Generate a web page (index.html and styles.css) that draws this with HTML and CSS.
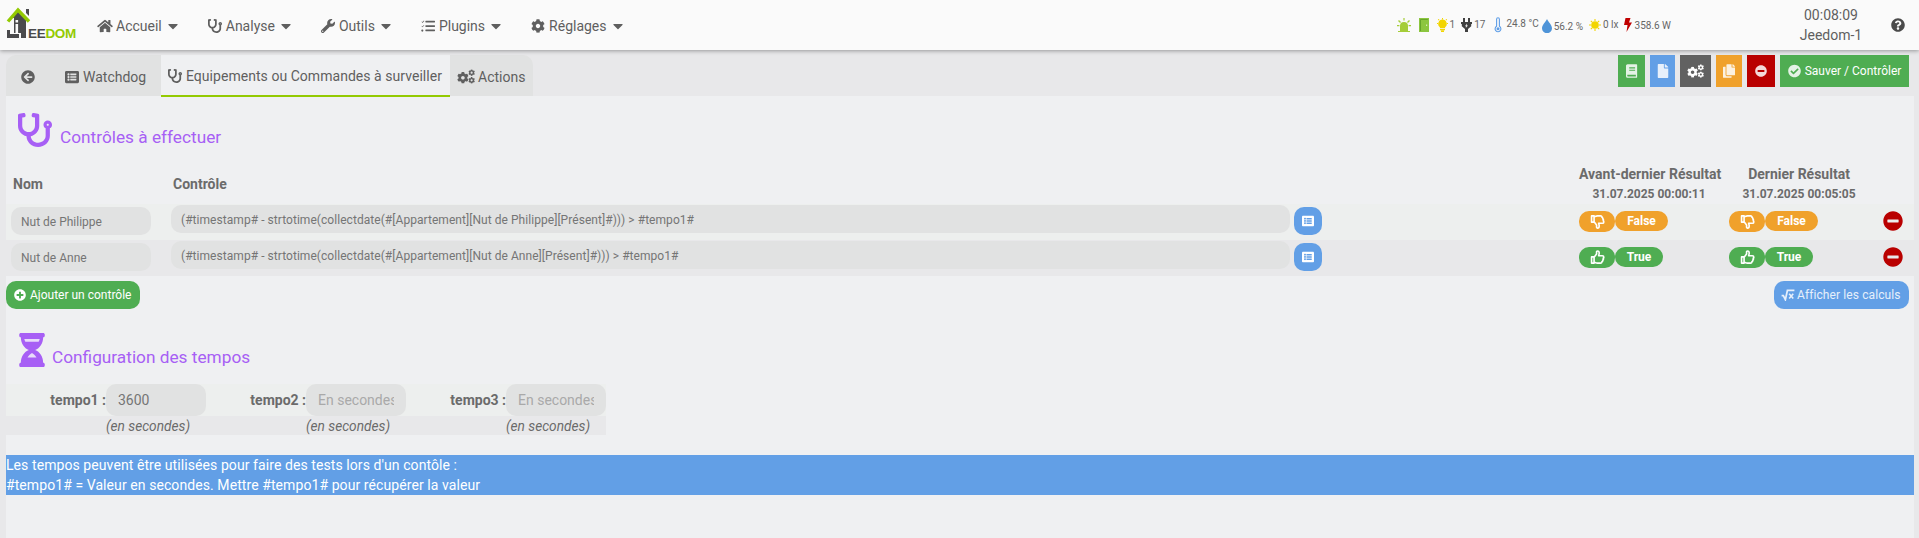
FILE: index.html
```html
<!DOCTYPE html>
<html lang="fr">
<head>
<meta charset="utf-8">
<title>Jeedom</title>
<link rel="stylesheet" href="styles.css">
</head>
<body>
<svg class="defs" width="0" height="0" aria-hidden="true">
  <symbol id="i-caret" viewBox="0 0 320 512"><path d="M31.3 192h257.3c17.8 0 26.7 21.5 14.1 34.1L174.1 354.8c-7.8 7.8-20.5 7.8-28.3 0L17.2 226.1C4.6 213.5 13.5 192 31.3 192z"/></symbol>
  <symbol id="i-home" viewBox="0 0 576 512"><path d="M280.37 148.26L96 300.11V464a16 16 0 0 0 16 16l112.06-.29a16 16 0 0 0 15.92-16V368a16 16 0 0 1 16-16h64a16 16 0 0 1 16 16v95.64a16 16 0 0 0 16 16.05L464 480a16 16 0 0 0 16-16V300L295.67 148.26a12.19 12.19 0 0 0-15.3 0zM571.6 251.47L488 182.56V44.05a12 12 0 0 0-12-12h-56a12 12 0 0 0-12 12v72.61L318.47 43a48 48 0 0 0-61 0L4.34 251.47a12 12 0 0 0-1.6 16.9l25.5 31A12 12 0 0 0 45.15 301l235.22-193.74a12.19 12.19 0 0 1 15.3 0L530.9 301a12 12 0 0 0 16.9-1.6l25.5-31a12 12 0 0 0-1.7-16.93z"/></symbol>
  <symbol id="i-steth" viewBox="0 0 512 512"><path d="M447.1 112c-34.2.5-62.3 28.4-63 62.6-.5 24.3 12.5 45.6 32 56.8V344c0 57.3-50.2 104-112 104-60 0-109.2-44.1-111.9-99.2C265 333.8 320 269.2 320 192V36.6c0-11.4-8.1-21.3-19.3-23.5L237.8.5c-13-2.6-25.6 5.8-28.2 18.8L206.4 35c-2.6 13 5.8 25.6 18.8 28.2l30.7 6.1v121.4c0 52.9-42.2 96.7-95.1 97.2-53.4.5-96.9-42.7-96.9-96V69.4l30.7-6.1c13-2.6 21.4-15.2 18.8-28.2l-3.1-15.7C107.7 6.4 95.1-2 82.1.6L19.3 13C8.1 15.3 0 25.1 0 36.6V192c0 77.3 55.1 142 128.1 156.8C130.7 439.2 208.6 512 304 512c97 0 176-75.4 176-168V231.4c19.1-11.1 32-31.7 32-55.4 0-35.7-29.2-64.5-64.9-64zm.9 80c-8.8 0-16-7.2-16-16s7.2-16 16-16 16 7.2 16 16-7.2 16-16 16z"/></symbol>
  <symbol id="i-wrench" viewBox="0 0 512 512"><path d="M507.73 109.1c-2.24-9.03-13.54-12.09-20.12-5.51l-74.36 74.36-67.88-11.31-11.31-67.88 74.36-74.36c6.62-6.62 3.43-17.9-5.66-20.16-47.38-11.74-99.55.91-136.58 37.93-39.64 39.64-50.55 97.1-34.05 147.2L18.74 402.76c-24.99 24.99-24.99 65.51 0 90.5 24.99 24.99 65.51 24.99 90.5 0l213.21-213.21c50.12 16.71 107.47 5.68 147.37-34.22 37.07-37.07 49.7-89.32 37.91-136.73zM64 472c-13.25 0-24-10.75-24-24 0-13.26 10.75-24 24-24s24 10.74 24 24c0 13.25-10.75 24-24 24z"/></symbol>
  <symbol id="i-tasks" viewBox="0 0 512 512"><path d="M176 64h320c9 0 16 7 16 16v32c0 9-7 16-16 16H176c-9 0-16-7-16-16V80c0-9 7-16 16-16zm0 160h320c9 0 16 7 16 16v32c0 9-7 16-16 16H176c-9 0-16-7-16-16v-32c0-9 7-16 16-16zm0 160h320c9 0 16 7 16 16v32c0 9-7 16-16 16H176c-9 0-16-7-16-16v-32c0-9 7-16 16-16zM48 384a40 40 0 1 1 0 80 40 40 0 0 1 0-80zM20 104l14-14 22 20 50-52 16 14-66 70zm0 160l14-14 22 20 50-52 16 14-66 70z"/></symbol>
  <symbol id="i-cog" viewBox="0 0 512 512"><path d="M487.4 315.7l-42.6-24.6c4.3-23.2 4.3-47 0-70.2l42.6-24.6c4.9-2.8 7.1-8.6 5.5-14-11.1-35.6-30-67.8-54.7-94.6-3.8-4.1-10-5.1-14.8-2.3L380.8 110c-17.9-15.4-38.5-27.3-60.8-35.1V25.8c0-5.6-3.9-10.5-9.4-11.7-36.7-8.2-74.3-7.8-109.2 0-5.5 1.2-9.4 6.1-9.4 11.7V75c-22.2 7.9-42.8 19.8-60.8 35.1L88.7 85.5c-4.9-2.8-11-1.9-14.8 2.3-24.7 26.7-43.6 58.9-54.7 94.6-1.7 5.4.6 11.2 5.5 14L67.3 221c-4.3 23.2-4.3 47 0 70.2l-42.6 24.6c-4.9 2.8-7.1 8.6-5.5 14 11.1 35.6 30 67.8 54.7 94.6 3.8 4.1 10 5.1 14.8 2.3l42.6-24.6c17.9 15.4 38.5 27.3 60.8 35.1v49.2c0 5.6 3.9 10.5 9.4 11.7 36.7 8.2 74.3 7.8 109.2 0 5.5-1.2 9.4-6.1 9.4-11.7v-49.2c22.2-7.9 42.8-19.8 60.8-35.1l42.6 24.6c4.9 2.8 11 1.9 14.8-2.3 24.7-26.7 43.6-58.9 54.7-94.6 1.5-5.5-.7-11.3-5.6-14.1zM256 336c-44.1 0-80-35.9-80-80s35.9-80 80-80 80 35.9 80 80-35.9 80-80 80z"/></symbol>
  <symbol id="i-cogs" viewBox="0 0 640 512"><use href="#i-cog" x="0" y="90" width="420" height="420"/><use href="#i-cog" x="400" y="0" width="240" height="240"/><use href="#i-cog" x="400" y="272" width="240" height="240"/></symbol>
  <symbol id="i-back" viewBox="0 0 512 512"><path d="M256 504C119 504 8 393 8 256S119 8 256 8s248 111 248 248-111 248-248 248zm28.9-143.6L209.4 288H392c13.3 0 24-10.7 24-24v-16c0-13.3-10.7-24-24-24H209.4l75.5-72.4c9.7-9.3 9.9-24.8.4-34.3l-11-10.9c-9.4-9.4-24.6-9.4-33.9 0L107.7 239c-9.4 9.4-9.4 24.6 0 33.9l132.7 132.7c9.4 9.4 24.6 9.4 33.9 0l11-10.9c9.5-9.5 9.3-25-.4-34.3z"/></symbol>
  <symbol id="i-list" viewBox="0 0 512 512"><path d="M464 480H48c-26.51 0-48-21.49-48-48V80c0-26.51 21.49-48 48-48h416c26.51 0 48 21.49 48 48v352c0 26.51-21.49 48-48 48zM128 120c-22.091 0-40 17.909-40 40s17.909 40 40 40 40-17.909 40-40-17.909-40-40-40zm0 96c-22.091 0-40 17.909-40 40s17.909 40 40 40 40-17.909 40-40-17.909-40-40-40zm0 96c-22.091 0-40 17.909-40 40s17.909 40 40 40 40-17.909 40-40-17.909-40-40-40zm288-136v-32c0-6.627-5.373-12-12-12H204c-6.627 0-12 5.373-12 12v32c0 6.627 5.373 12 12 12h200c6.627 0 12-5.373 12-12zm0 96v-32c0-6.627-5.373-12-12-12H204c-6.627 0-12 5.373-12 12v32c0 6.627 5.373 12 12 12h200c6.627 0 12-5.373 12-12zm0 96v-32c0-6.627-5.373-12-12-12H204c-6.627 0-12 5.373-12 12v32c0 6.627 5.373 12 12 12h200c6.627 0 12-5.373 12-12z"/></symbol>
  <symbol id="i-book" viewBox="0 0 448 512"><path d="M60 0h330c14 0 26 12 26 26v460c0 14-12 26-26 26H60c-33 0-60-27-60-60V60C0 27 27 0 60 0zm60 120v40h220v-40H120zm0 90v40h220v-40H120zM48 400v40c0 10 8 20 20 20h300v-60H48z"/></symbol>
  <symbol id="i-file" viewBox="0 0 384 512"><path d="M224 136V0H24C10.7 0 0 10.7 0 24v464c0 13.3 10.7 24 24 24h336c13.3 0 24-10.7 24-24V160H248c-13.2 0-24-10.8-24-24zm160-14.1v6.1H256V0h6.1c6.4 0 12.5 2.5 17 7l97.9 98c4.5 4.5 7 10.6 7 16.9z"/></symbol>
  <symbol id="i-copy" viewBox="0 0 448 512"><path d="M320 448v40c0 13.255-10.745 24-24 24H24c-13.255 0-24-10.745-24-24V120c0-13.255 10.745-24 24-24h72v296c0 30.879 25.121 56 56 56h168zm0-344V0H152c-13.255 0-24 10.745-24 24v368c0 13.255 10.745 24 24 24h272c13.255 0 24-10.745 24-24V128H344c-13.2 0-24-10.8-24-24zm120.971-31.029L375.029 7.029A24 24 0 0 0 358.059 0H352v96h96v-6.059a24 24 0 0 0-7.029-16.97z"/></symbol>
  <symbol id="i-minus" viewBox="0 0 512 512"><path d="M256 8C119 8 8 119 8 256s111 248 248 248 248-111 248-248S393 8 256 8zM124 296c-6.6 0-12-5.4-12-12v-56c0-6.6 5.4-12 12-12h264c6.6 0 12 5.4 12 12v56c0 6.6-5.4 12-12 12H124z"/></symbol>
  <symbol id="i-plus" viewBox="0 0 512 512"><path d="M256 8C119 8 8 119 8 256s111 248 248 248 248-111 248-248S393 8 256 8zm144 276c0 6.6-5.4 12-12 12h-92v92c0 6.6-5.4 12-12 12h-56c-6.6 0-12-5.4-12-12v-92h-92c-6.6 0-12-5.4-12-12v-56c0-6.6 5.4-12 12-12h92v-92c0-6.6 5.4-12 12-12h56c6.6 0 12 5.4 12 12v92h92c6.6 0 12 5.4 12 12v56z"/></symbol>
  <symbol id="i-check" viewBox="0 0 512 512"><path d="M504 256c0 136.967-111.033 248-248 248S8 392.967 8 256 119.033 8 256 8s248 111.033 248 248zM227.314 387.314l184-184c6.248-6.248 6.248-16.379 0-22.627l-22.627-22.627c-6.248-6.249-16.379-6.249-22.628 0L216 308.118l-69.059-69.059c-6.248-6.248-16.379-6.248-22.628 0l-22.627 22.627c-6.248 6.248-6.248 16.379 0 22.627l104 104c6.249 6.249 16.379 6.249 22.628.001z"/></symbol>
  <symbol id="i-help" viewBox="0 0 512 512"><path d="M504 256c0 136.997-111.043 248-248 248S8 392.997 8 256C8 119.083 119.043 8 256 8s248 111.083 248 248zM262.655 90c-54.497 0-89.255 22.957-116.549 63.758-3.536 5.286-2.353 12.415 2.715 16.258l34.699 26.31c5.205 3.947 12.621 3.008 16.665-2.122 17.864-22.658 30.113-35.797 57.303-35.797 20.429 0 45.698 13.148 45.698 32.958 0 14.976-12.363 22.667-32.534 33.976C247.128 238.528 216 254.941 216 296v4c0 6.627 5.373 12 12 12h56c6.627 0 12-5.373 12-12v-1.333c0-28.462 83.186-29.647 83.186-106.667 0-58.002-60.165-102-116.531-102zM256 338c-25.365 0-46 20.635-46 46 0 25.364 20.635 46 46 46s46-20.636 46-46c0-25.365-20.635-46-46-46z"/></symbol>
  <symbol id="i-up" viewBox="0 0 24 24"><path fill="none" stroke="currentColor" stroke-width="2.6" stroke-linejoin="round" d="M2.5 11h4v10h-4zM6.5 11.500l4-5V3.200c0-1 .6-1.700 1.600-1.700 1.800 0 2.600 1.700 2.600 3.500 0 1.500-.6 2.800-.9 4.200h5.900c1.500 0 2.400 1 2.400 2.200 0 .8-.4 1.400-1 1.800.4.500.5 1 .4 1.500-.1.600-.5 1.100-1 1.400.2.600.1 1.200-.2 1.600-.3.500-.8.800-1.200.9.100 1.300-.8 2.400-2.200 2.400h-5c-1.800 0-3-.7-5.400-1.500"/></symbol>
  <symbol id="i-down" viewBox="0 0 24 24"><g transform="matrix(1 0 0 -1 0 24)"><path fill="none" stroke="currentColor" stroke-width="2.6" stroke-linejoin="round" d="M2.5 11h4v10h-4zM6.5 11.500l4-5V3.200c0-1 .6-1.700 1.600-1.700 1.800 0 2.600 1.700 2.600 3.500 0 1.500-.6 2.800-.9 4.200h5.900c1.500 0 2.400 1 2.400 2.200 0 .8-.4 1.400-1 1.800.4.500.5 1 .4 1.500-.1.600-.5 1.100-1 1.400.2.600.1 1.200-.2 1.600-.3.500-.8.800-1.200.9.100 1.300-.8 2.400-2.200 2.400h-5c-1.800 0-3-.7-5.400-1.500"/></g></symbol>
  <symbol id="i-sqrt" viewBox="0 0 24 20"><path fill="none" stroke="currentColor" stroke-width="3" d="M1 11h3l3.500 7L11 2h12"/><path fill="none" stroke="currentColor" stroke-width="2.800" d="M14 8l7 8M21 8l-7 8"/></symbol>
</svg>

<header class="navbar">
  <svg class="logo" viewBox="0 0 82 50" role="img" aria-label="Jeedom">
    <path fill="#4a4a4c" d="M11 18l8-8 7 7v21H21V33h-7V18z"/>
    <path fill="#4a4a4c" d="M26 9h3v7l-3-3z"/>
    <path fill="#fafafa" d="M15.500 20h2.600v2.600h-2.600zM15.500 24h2.600v10h-2.600z"/>
    <path fill="#4a4a4c" d="M7 30h3v4h9v4H7z"/>
    <path fill="none" stroke="#93ca02" stroke-width="3.400" d="M8 21.500L18 10l11 11.500"/>
    <text class="logo-text" x="28" y="38"><tspan class="logo-ee">EE</tspan><tspan class="logo-dom">DOM</tspan></text>
  </svg>
  <nav class="menu">
    <a class="menu-item"><svg class="ic home"><use href="#i-home"/></svg>Accueil<svg class="caret"><use href="#i-caret"/></svg></a>
    <a class="menu-item"><svg class="ic"><use href="#i-steth"/></svg>Analyse<svg class="caret"><use href="#i-caret"/></svg></a>
    <a class="menu-item"><svg class="ic"><use href="#i-wrench"/></svg>Outils<svg class="caret"><use href="#i-caret"/></svg></a>
    <a class="menu-item"><svg class="ic"><use href="#i-tasks"/></svg>Plugins<svg class="caret"><use href="#i-caret"/></svg></a>
    <a class="menu-item"><svg class="ic"><use href="#i-cog"/></svg>Réglages<svg class="caret"><use href="#i-caret"/></svg></a>
  </nav>
  <div class="status">
    <svg class="st st-alert" viewBox="0 0 14 14"><path fill="#a5cd39" d="M3 13V8a4 4 0 0 1 8 0v5zM1 13h12v1H1zM6.400 0h1.200v2.500H6.400zM1 3l1-.9 2 2-.9.9zM13 3l-1-.9-2 2 .9.9zM0 7h2.400v1.200H0zM11.600 7H14v1.200h-2.400z"/></svg>
    <svg class="st st-door" viewBox="0 0 10 14"><path fill="#8cc63f" d="M0 0h10v14H0z"/><path fill="#5d9c26" d="M1.200 1.200h7.600v.8H2v11H1.200z"/><path fill="#d7eab0" d="M7 6.500h1.200v1.400H7z"/></svg>
    <span class="st-item st-bulb"><svg class="st" viewBox="0 0 11 14"><path fill="#f2d500" d="M5.500 1.500a4.300 4.300 0 0 1 2.600 7.700V10.300H2.900V9.200A4.300 4.300 0 0 1 5.500 1.500zM3 10.900h5v1.300H3zM4 12.600h3V14H4zM5 0h1v1.300H5zM0 5h1v1H0zM10 5h1v1h-1zM.8 1.600l.8-.7.9.9-.8.7zM10.200 1.600l-.8-.7-.9.9.8.7z"/></svg><span class="raised1">1</span></span>
    <span class="st-item st-plug"><svg class="st" viewBox="0 0 11 14"><path fill="#3f3f3f" d="M2 0h2v4h3V0h2v4h2v2h-.8v2.300L7 11v3H4v-3L.8 8.300V6H0V4h2z"/><path fill="#fafafa" d="M6 5.500L4 8.300h1.200L4.700 10 7 7.400H5.700z"/></svg><span class="raised1">17</span></span>
    <span class="st-item st-temp"><svg class="st" viewBox="0 0 8 16"><path fill="none" stroke="#5f9ee7" stroke-width="1.100" d="M2.600 9.300V2.200a1.400 1.400 0 0 1 2.800 0v7.100a2.900 2.900 0 1 1-2.800 0z"/><circle cx="4" cy="11.800" r="1.500" fill="#5f9ee7"/></svg><span class="raised">24.8 °C</span></span>
    <span class="st-item st-hum"><svg class="st" viewBox="0 0 10 14"><path fill="#4f94d8" d="M5 0c1 2.600 5 6 5 9.200A5 5 0 0 1 0 9.200C0 6 4 2.600 5 0z"/></svg><span class="lower">56.2 %</span></span>
    <span class="st-item st-lum"><svg class="st" viewBox="0 0 12 12"><circle cx="6" cy="6" r="3.800" fill="#f2d500"/><path stroke="#f2d500" stroke-width="1.100" d="M6 0v2M6 10v2M0 6h2M10 6h2M1.800 1.800l1.400 1.400M8.800 8.800l1.400 1.400M10.200 1.800L8.800 3.200M3.200 8.800l-1.400 1.400"/></svg><span class="raised1">0 lx</span></span>
    <span class="st-item st-pow"><svg class="st" viewBox="0 0 8 14"><path fill="#c00000" d="M1.500 0h5L5 4.500h3L2.500 14 3.500 7H0z"/></svg><span>358.6 W</span></span>
  </div>
  <div class="clock"><span>00:08:09</span><span>Jeedom-1</span></div>
  <svg class="help"><use href="#i-help"/></svg>
</header>

<main class="page">
  <div class="topbar">
    <ul class="tabs">
      <li class="tab tab-back"><svg class="ic"><use href="#i-back"/></svg></li>
      <li class="tab tab-watch"><svg class="ic"><use href="#i-list"/></svg>Watchdog</li>
      <li class="tab tab-active"><svg class="ic"><use href="#i-steth"/></svg>Equipements ou Commandes à surveiller</li>
      <li class="tab tab-actions"><svg class="ic ic-cogs"><use href="#i-cogs"/></svg>Actions</li>
    </ul>
    <div class="toolbar">
      <a class="tool green w27"><svg class="ic"><use href="#i-book"/></svg></a>
      <a class="tool blue w25"><svg class="ic"><use href="#i-file"/></svg></a>
      <a class="tool gray w31"><svg class="ic ic-cogs"><use href="#i-cogs"/></svg></a>
      <a class="tool orange w26"><svg class="ic"><use href="#i-copy"/></svg></a>
      <a class="tool red w28"><svg class="ic"><use href="#i-minus"/></svg></a>
      <a class="tool green tool-save"><svg class="ic"><use href="#i-check"/></svg>Sauver / Contrôler</a>
    </div>
  </div>

  <section class="panel">
    <h3 class="section-title"><svg class="title-ic"><use href="#i-steth"/></svg><span class="title-text">Contrôles à effectuer</span></h3>

    <div class="grid grid-head">
      <div class="th name-th">Nom</div>
      <div class="th">Contrôle</div>
      <div></div>
      <div class="result-head"><div>Avant-dernier Résultat</div><div class="date">31.07.2025 00:00:11</div></div>
      <div class="result-head"><div>Dernier Résultat</div><div class="date">31.07.2025 00:05:05</div></div>
      <div></div>
    </div>

    <div class="grid row row-odd">
      <div class="cell-name"><input class="field field-name" value="Nut de Philippe" readonly></div>
      <div class="cell-expr"><input class="field field-expr" value="(#timestamp# - strtotime(collectdate(#[Appartement][Nut de Philippe][Présent]#))) &gt; #tempo1#" readonly></div>
      <div class="cell-btn"><a class="square-btn"><svg><use href="#i-list"/></svg></a></div>
      <div class="result"><span class="pill pill-ic orange"><svg><use href="#i-down"/></svg></span><span class="pill pill-txt orange">False</span></div>
      <div class="result"><span class="pill pill-ic orange"><svg><use href="#i-down"/></svg></span><span class="pill pill-txt orange">False</span></div>
      <div class="result"><svg class="del"><use href="#i-minus"/></svg></div>
    </div>
    <div class="grid row row-even">
      <div class="cell-name"><input class="field field-name" value="Nut de Anne" readonly></div>
      <div class="cell-expr"><input class="field field-expr" value="(#timestamp# - strtotime(collectdate(#[Appartement][Nut de Anne][Présent]#))) &gt; #tempo1#" readonly></div>
      <div class="cell-btn"><a class="square-btn"><svg><use href="#i-list"/></svg></a></div>
      <div class="result"><span class="pill pill-ic green"><svg><use href="#i-up"/></svg></span><span class="pill pill-txt pill-true green">True</span></div>
      <div class="result"><span class="pill pill-ic green"><svg><use href="#i-up"/></svg></span><span class="pill pill-txt pill-true green">True</span></div>
      <div class="result"><svg class="del"><use href="#i-minus"/></svg></div>
    </div>

    <div class="table-actions">
      <a class="round-btn green btn-add"><svg><use href="#i-plus"/></svg>Ajouter un contrôle</a>
      <a class="round-btn blue btn-calc"><svg class="sqrt"><use href="#i-sqrt"/></svg>Afficher les calculs</a>
    </div>

    <h3 class="section-title section-title-2">
      <svg class="title-ic hourglass" viewBox="0 0 384 512"><path d="M360 0H24C10.745 0 0 10.745 0 24v16c0 13.255 10.745 24 24 24 0 90.965 51.016 167.734 120.842 192C75.016 280.266 24 357.035 24 448c-13.255 0-24 10.745-24 24v16c0 13.255 10.745 24 24 24h336c13.255 0 24-10.745 24-24v-16c0-13.255-10.745-24-24-24 0-90.965-51.016-167.734-120.842-192C308.984 231.734 360 154.965 360 64c13.255 0 24-10.745 24-24V24c0-13.255-10.745-24-24-24z"/><path class="glass" d="M76 90h232c-4 14-9 28-16 40H92c-7-12-12-26-16-40zM192 300c30 15 52 42 68 70H124c16-28 38-55 68-70z"/></svg>
      <span class="title-text">Configuration des tempos</span>
    </h3>

    <div class="tempos">
      <div class="tempo-row tempo-odd">
        <label class="tempo-cell"><span class="tempo-label">tempo1 :</span><input class="field field-tempo" value="3600" readonly></label>
        <label class="tempo-cell"><span class="tempo-label">tempo2 :</span><input class="field field-tempo" placeholder="En secondes" readonly></label>
        <label class="tempo-cell"><span class="tempo-label">tempo3 :</span><input class="field field-tempo" placeholder="En secondes" readonly></label>
      </div>
      <div class="tempo-row tempo-even">
        <div class="tempo-cell"><em class="unit">(en secondes)</em></div>
        <div class="tempo-cell"><em class="unit">(en secondes)</em></div>
        <div class="tempo-cell"><em class="unit">(en secondes)</em></div>
      </div>
    </div>

    <div class="banner">Les tempos peuvent être utilisées pour faire des tests lors d'un contôle :<br>#tempo1# = Valeur en secondes. Mettre #tempo1# pour récupérer la valeur</div>
  </section>
</main>
</body>
</html>
```
FILE: styles.css
```css
* { box-sizing: border-box; }
html, body { margin: 0; height: 538px; overflow: hidden; }
body { background: #e8e8ea; font-family: Roboto, "Liberation Sans", sans-serif; font-size: 14px; color: #6b6b6b; }
.defs { position: absolute; }
svg { fill: currentColor; display: block; flex: none; }
a { color: inherit; text-decoration: none; }

/* navbar */
.navbar { height: 50px; background: #fafafa; box-shadow: 0 1px 4px rgba(0,0,0,.35); display: flex; align-items: center; position: relative; z-index: 2; color: #5f5f5f; }
.logo { width: 82px; height: 50px; }
.logo-text { font-family: "Liberation Sans", sans-serif; font-weight: 700; font-size: 13.5px; letter-spacing: -.3px; }
.logo-ee { fill: #4a4a4c; }
.logo-dom { fill: #93ca02; }
.menu { display: flex; padding-top: 1px; }
.menu-item { display: flex; align-items: center; padding: 0 15px; line-height: 20px; }
.menu-item .ic { width: 14px; height: 14px; margin-right: 4px; }
.menu-item .home { width: 16px; margin-right: 3px; }
.caret { width: 10px; height: 16px; margin-left: 6px; }

.status { margin-left: auto; display: flex; align-items: center; font-size: 10px; color: #666; height: 20px; margin-right: 121px; }
.st { height: 14px; width: auto; }
.st-alert { width: 14px; margin-right: 8px; }
.st-door { width: 10px; height: 14px; margin-right: 8px; }
.st-item { display: flex; align-items: center; gap: 2px; }
.st-bulb { margin-right: 6px; }
.st-bulb .st { width: 11px; }
.st-plug { margin-right: 9px; }
.st-plug .st { width: 11px; }
.st-temp { gap: 4px; margin-right: 3px; }
.st-temp .st { width: 8px; height: 16px; }
.st-hum { margin-right: 6px; }
.st-hum .st { width: 10px; height: 14px; margin-top: 2px; }
.st-lum { margin-right: 5px; }
.st-lum .st { width: 12px; height: 12px; }
.st-pow { gap: 3px; }
.st-pow .st { width: 8px; }
.raised { position: relative; top: -2px; }
.raised1 { position: relative; top: -1px; }
.lower { position: relative; top: 1px; }

.clock { width: 78px; display: flex; flex-direction: column; align-items: center; font-size: 14px; line-height: 20px; margin-right: 21px; }
.help { width: 14px; height: 14px; margin-right: 14px; color: #4a4a4a; }

/* top strip */
.page { padding: 5px 5px 0 6px; }
.topbar { display: flex; justify-content: space-between; height: 41px; }
.tabs { list-style: none; margin: 0; padding: 0; display: flex; background: #e1e2e2; border-radius: 10px 10px 0 0; height: 41px; width: 527px; color: #5f5f5f; }
.tab { display: flex; align-items: center; line-height: 20px; white-space: nowrap; padding-top: 2px; }
.tab .ic { width: 14px; height: 14px; }
.tab-back { width: 44px; padding-left: 15px; }
.tab-watch { width: 111px; padding-left: 15px; }
.tab-watch .ic { margin-right: 4px; }
.tab-active { width: 289px; height: 42px; padding: 2px 0 0 7px; background: #eff0f2; border-bottom: 2px solid #93ca02; position: relative; z-index: 1; letter-spacing: .04px; }
.tab-active .ic { margin-right: 4px; }
.tab-actions { padding-left: 7px; }
.tab .ic-cogs { width: 18px; height: 15px; margin-right: 3px; }

.toolbar { display: flex; gap: 5px; color: #fff; margin-right: 5px; }
.tool { height: 32px; display: flex; align-items: center; justify-content: center; font-size: 12px; }
.tool .ic { width: 12px; height: 14px; opacity: .85; }
.tool .ic-cogs { width: 17px; height: 14px; opacity: 1; }
.w27 { width: 27px; } .w25 { width: 25px; } .w31 { width: 31px; } .w26 { width: 26px; } .w28 { width: 28px; }
.tool-save { width: 129px; }
.tool-save .ic { margin-right: 4px; width: 13px; }

.green { background: #4fad52; }
.blue { background: #629fe6; }
.gray { background: #616161; }
.orange { background: #f0a12b; }
.red { background: #b90000; }

/* panel */
.panel { background: #eff0f2; height: 442px; overflow: hidden; padding-top: 17px; }
.section-title { margin: 0 0 17px 12px; font-weight: 400; font-size: 17.25px; line-height: 20px; color: #a75ff5; display: flex; align-items: flex-end; height: 34px; }
.title-ic { width: 34px; height: 34px; }
.title-text { margin: 0 0 0 8px; }
.section-title-2 { margin: 24px 0 17px 13px; }
.section-title-2 .title-text { margin-left: 7px; }
.hourglass { width: 26px; height: 34px; }
.glass { fill: #e8dcfa; }

.grid { display: grid; grid-template-columns: 165px 1123px 285px 150px 154px 31px; }
.grid-head { height: 40px; font-weight: 700; }
.th { line-height: 20px; padding: 10px 0 0 2px; }
.name-th { padding-left: 7px; }
.result-head { width: 140px; text-align: center; line-height: 20px; white-space: nowrap; }
.date { font-size: 12px; }
.row { height: 36px; }
.row-odd { background: #edefee; }
.row-even { background: #e8e8ea; }
.field { display: block; border: 0; outline: 0; background: #e1e2e2; border-radius: 10px; font-family: inherit; color: #757575; }
.field::placeholder { color: #a9a9a9; }
.cell-name { padding: 3px 0 0 5px; }
.field-name { width: 140px; height: 28px; font-size: 12px; padding: 2px 10px 0; }
.cell-expr { padding-top: 1px; }
.field-expr { width: 1119px; height: 28px; font-size: 12px; padding: 2px 10px 0; letter-spacing: .05px; }
.cell-btn { padding-top: 3px; }
.square-btn { width: 28px; height: 28px; border-radius: 10px; background: #629fe6; color: #fff; display: flex; align-items: center; justify-content: center; }
.square-btn svg { width: 12px; height: 12px; }
.result { display: flex; padding-top: 7px; align-items: flex-start; }
.pill { color: #fff; display: flex; align-items: center; justify-content: center; font-weight: 700; font-size: 12px; border-radius: 10px; }
.pill-ic { width: 36px; height: 21px; }
.pill-ic svg { width: 15px; height: 15px; }
.pill-txt { width: 53px; height: 20px; }
.pill-true { width: 48px; }
.del { width: 20px; height: 20px; color: #b90000; }

.table-actions { display: flex; justify-content: space-between; padding: 5px 5px 0 0; }
.round-btn { height: 28px; border-radius: 10px; display: flex; align-items: center; font-size: 12px; color: #fff; }
.round-btn svg { width: 12px; height: 12px; margin-right: 4px; }
.btn-add { width: 134px; padding-left: 8px; }
.btn-calc { width: 135px; padding-left: 7px; color: #e6effb; letter-spacing: .1px; }
.btn-calc .sqrt { width: 14px; margin-right: 2px; }

.tempos { width: 600px; }
.tempo-row { display: grid; grid-template-columns: repeat(3, 200px); }
.tempo-odd { background: #edefee; height: 32px; }
.tempo-even { background: #e8e8ea; height: 19px; }
.tempo-cell { display: flex; justify-content: flex-end; align-items: center; }
.tempo-label { font-weight: 700; white-space: nowrap; }
.field-tempo { width: 100px; height: 32px; font-size: 14px; padding: 0 12px; }
.unit { width: 100px; font-size: 13.7px; line-height: 19px; white-space: nowrap; padding-top: 1px; }

.banner { margin-top: 20px; height: 40px; background: #629fe6; color: #fff; line-height: 20px; letter-spacing: .08px; }
```
